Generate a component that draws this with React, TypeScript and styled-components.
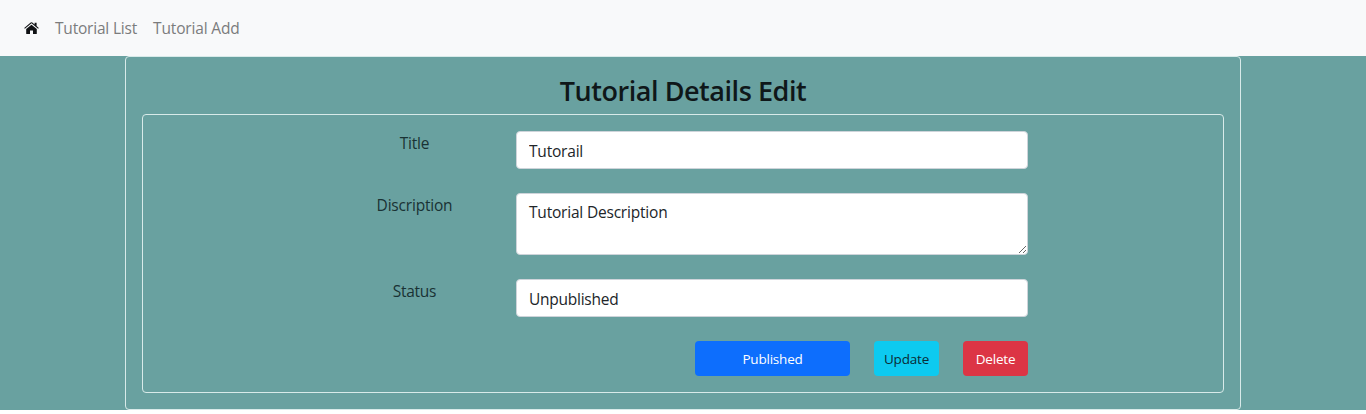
import React from "react";
import styled, { createGlobalStyle } from "styled-components";

const GlobalStyle = createGlobalStyle`
  *, *::before, *::after { box-sizing: border-box; }
  body {
    margin: 0;
    background: #fff;
    color: #212529;
    font: 380 15.5px/24px "Open Sans", "Noto Sans", sans-serif;
    overflow: hidden;
  }
`;

const Navbar = styled.nav`
  display: flex;
  align-items: center;
  height: 56px;
  padding: 0 24px;
  background: #f8f9fa;
`;

const HomeLink = styled.a`
  display: flex;
  margin-right: 16px;
  color: #101214;
`;

const NavLink = styled.a<{ $spacing: number }>`
  margin-right: 16px;
  color: #7b7c7d;
  white-space: nowrap;
  letter-spacing: ${(p) => p.$spacing}px;
`;

const Page = styled.main`
  height: 354px;
  background: #69a1a0;
`;

const Card = styled.section`
  width: 1116px;
  height: 354px;
  margin: 0 auto;
  padding: 16px;
  border: 1px solid #d8eae9;
  border-radius: 4px;
`;

const Heading = styled.h1`
  height: 41px;
  margin: 0;
  padding-top: 1px;
  color: #0f1719;
  font-size: 27px;
  font-weight: 570;
  line-height: 34px;
  letter-spacing: -0.45px;
  text-align: center;
`;

const FormPanel = styled.form`
  display: flex;
  flex-direction: column;
  gap: 24px;
  height: 279px;
  padding: 16px 195px 0 170px;
  border: 1px solid #d8eae9;
  border-radius: 4px;
`;

const Row = styled.div`
  display: grid;
  grid-template-columns: 203px 512px;
`;

const Label = styled.label<{ $spacing: number }>`
  color: #193234;
  text-align: center;
  letter-spacing: ${(p) => p.$spacing}px;
`;

const Input = styled.input<{ $spacing: number }>`
  width: 100%;
  height: 38px;
  padding: 6px 12px 4px;
  border: 1px solid #ced4da;
  border-radius: 4px;
  background: #fff;
  color: #212529;
  font: inherit;
  letter-spacing: ${(p) => p.$spacing}px;
`;

const TextArea = styled.textarea<{ $spacing: number }>`
  display: block;
  width: 100%;
  height: 62px;
  padding: 6px 12px;
  border: 1px solid #ced4da;
  border-radius: 4px;
  background: #fff;
  color: #212529;
  font: inherit;
  letter-spacing: ${(p) => p.$spacing}px;
  resize: vertical;
`;

const Actions = styled.div`
  display: flex;
  justify-content: flex-end;
  gap: 24px;
`;

const Button = styled.button<{ $bg: string; $fg: string; $width: number; $spacing: number }>`
  width: ${(p) => p.$width}px;
  height: 35px;
  padding: 1px 0 0;
  border: 0;
  border-radius: 4px;
  background: ${(p) => p.$bg};
  color: ${(p) => p.$fg};
  font: inherit;
  font-size: 13.5px;
  letter-spacing: ${(p) => p.$spacing}px;
`;

function HomeIcon() {
  return (
    <svg width="15" height="12" viewBox="0 0 15 12" fill="currentColor" aria-hidden="true">
      <path d="M7.5 2.7 12.8 7.1V11.4Q12.8 12 12.2 12H9V8.4H6V12H2.8Q2.2 12 2.2 11.4V7.1Z" />
      <path d="M.2 6 6.7.5Q7.5-.1 8.3.5L10.6 2.4V.7H12.6V4.1L14.8 6 14.1 6.8 7.5 1.3.9 6.8Z" />
    </svg>
  );
}

export default function App() {
  return (
    <>
      <GlobalStyle />
      <Navbar>
        <HomeLink aria-label="Home"><HomeIcon /></HomeLink>
        <NavLink $spacing={-0.2}>Tutorial List</NavLink>
        <NavLink $spacing={-0.15}>Tutorial Add</NavLink>
      </Navbar>
      <Page>
        <Card>
          <Heading>Tutorial Details Edit</Heading>
          <FormPanel>
            <Row>
              <Label htmlFor="title" $spacing={-0.2}>Title</Label>
              <Input id="title" defaultValue="Tutorail" $spacing={-0.2} />
            </Row>
            <Row>
              <Label htmlFor="description" $spacing={-0.2}>Discription</Label>
              <TextArea id="description" defaultValue="Tutorial Description" $spacing={-0.2} />
            </Row>
            <Row>
              <Label htmlFor="status" $spacing={-0.3}>Status</Label>
              <Input id="status" defaultValue="Unpublished" $spacing={-0.25} />
            </Row>
            <Actions>
              <Button type="button" $bg="#0d6efd" $fg="#fff" $width={155} $spacing={-0.2}>Published</Button>
              <Button type="button" $bg="#0dcaf0" $fg="#0b2b35" $width={65} $spacing={-0.2}>Update</Button>
              <Button type="button" $bg="#dc3545" $fg="#fff" $width={65} $spacing={-0.2}>Delete</Button>
            </Actions>
          </FormPanel>
        </Card>
      </Page>
    </>
  );
}
